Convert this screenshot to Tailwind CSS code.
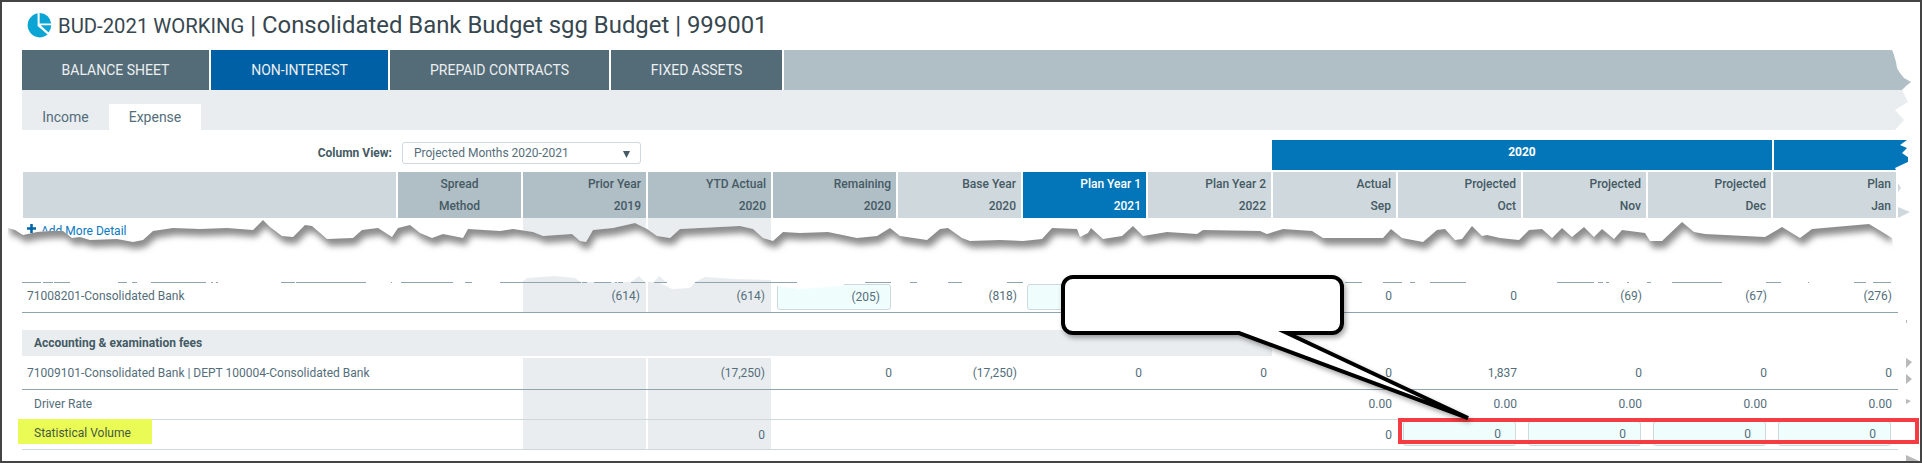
<!DOCTYPE html>
<html lang="en">
<head>
    <meta charset="UTF-8">
    <title>BUD-2021 WORKING</title>
    <script src="https://cdn.jsdelivr.net/npm/@tailwindcss/browser@4"></script>
</head>
<body class="bg-white font-['Roboto',sans-serif] text-[12px] text-[#546e7a]">
<div class="relative w-[1922px] h-[463px] overflow-hidden">
    <div class="w-full h-full border-2 border-[#444444] pl-[20px] overflow-hidden">
        <!-- title -->
        <div class="flex items-center h-[48px] text-[#37474f]">
            <svg class="w-[27px] h-[48px] shrink-0 ml-[4px] mr-[5px]" viewBox="26 2 27 48">
                <path d="M37.6 13.2 V26 L47.6 34.6 A12.2 12.2 0 1 1 37.6 13.2 Z" fill="#0ba5d5"/>
                <path d="M39.6 13 A11.5 11.5 0 0 1 51.2 23.6 H39.6 Z" fill="#0ba5d5"/>
                <path d="M40.6 25.2 H51.2 A12 12 0 0 1 48.6 32.6 Z" fill="#0ba5d5"/>
            </svg>
            <span class="text-[20.3px] whitespace-pre">BUD-2021 WORKING</span>
            <span class="text-[23.9px] whitespace-pre"> | Consolidated Bank Budget sgg Budget | 999001</span>
        </div>
        <!-- main tabs -->
        <div class="flex h-[40px] text-[14px] text-[#eceff1]">
            <div class="w-[189px] flex items-center justify-center bg-[#546c78] border-r-2 border-white">BALANCE SHEET</div>
            <div class="w-[179px] flex items-center justify-center bg-[#0060a5] border-r-2 border-white">NON-INTEREST</div>
            <div class="w-[221px] flex items-center justify-center bg-[#546c78] border-r-2 border-white">PREPAID CONTRACTS</div>
            <div class="w-[173px] flex items-center justify-center bg-[#546c78] border-r-2 border-white">FIXED ASSETS</div>
            <div class="w-[1127px] bg-[#b0bec5] [clip-path:polygon(0_0,1108px_0,1110px_5px,1112px_12px,1113px_18px,1116px_23px,1120px_28px,1127px_32px,1122px_36px,1118px_40px,0_40px)]"></div>
        </div>
        <!-- sub tabs -->
        <div class="flex items-end h-[40px] w-[1886px] bg-[#e9edf0] text-[14px] text-[#546e7a] [clip-path:polygon(0_0,1880px_0,1886px_12px,1873px_20px,1882px_30px,1873px_40px,0_40px)]">
            <div class="w-[87px] h-[26px] flex items-center justify-center">Income</div>
            <div class="w-[92px] h-[26px] flex items-center justify-center bg-white">Expense</div>
        </div>
        <!-- column view + year bands -->
        <div class="flex h-[32px] mt-[10px]">
            <div class="w-[1250px] flex items-start justify-start pt-[2px]">
                <div class="w-[370px] h-[22px] flex items-center justify-end font-bold text-[#455a64]">Column View:</div>
                <div class="ml-[10px] w-[239px] h-[22px] flex items-center justify-between pl-[11px] pr-[10px] border border-[#cfd8dc] rounded-[3px]">
                    <span>Projected Months 2020-2021</span>
                    <svg class="w-[7px] h-[7px] mt-[3px]" viewBox="0 0 8 8"><path d="M0 0 H8 L4 8 Z" fill="#455a64"/></svg>
                </div>
            </div>
            <div class="w-[500px] h-[30px] pb-[6px] mr-[2px] bg-[#0276b8] flex items-center justify-center text-white font-bold">2020</div>
            <div class="w-[134px] h-[30px] bg-[#0276b8] [clip-path:polygon(0_0,133px_0,126px_5px,133px_8px,128px_13px,138px_20px,121px_28px,122px_30px,0_30px)]"></div>
        </div>
        <!-- column headers -->
        <div class="grid grid-cols-[376px_repeat(12,125px)] w-[1876px] h-[46px] font-medium leading-[22px] text-[#455a64]">
            <div class="ml-px bg-[#cfd8dc] border-r-2 border-white"></div>
            <div class="bg-[#b0bec5] border-r-2 border-white text-center py-px">Spread<br>Method</div>
            <div class="bg-[#b0bec5] border-r-2 border-white text-right pr-[5px] py-px">Prior Year<br>2019</div>
            <div class="bg-[#b0bec5] border-r-2 border-white text-right pr-[5px] py-px">YTD Actual<br>2020</div>
            <div class="bg-[#b0bec5] border-r-2 border-white text-right pr-[5px] py-px">Remaining<br>2020</div>
            <div class="bg-[#cfd8dc] border-r-2 border-white text-right pr-[5px] py-px">Base Year<br>2020</div>
            <div class="bg-[#0276b8] border-r-2 border-white text-right pr-[5px] py-px text-white">Plan Year 1<br>2021</div>
            <div class="bg-[#cfd8dc] border-r-2 border-white text-right pr-[5px] py-px">Plan Year 2<br>2022</div>
            <div class="bg-[#cfd8dc] border-r-2 border-white text-right pr-[5px] py-px">Actual<br>Sep</div>
            <div class="bg-[#cfd8dc] border-r-2 border-white text-right pr-[5px] py-px">Projected<br>Oct</div>
            <div class="bg-[#cfd8dc] border-r-2 border-white text-right pr-[5px] py-px">Projected<br>Nov</div>
            <div class="bg-[#cfd8dc] border-r-2 border-white text-right pr-[5px] py-px">Projected<br>Dec</div>
            <div class="bg-[#cfd8dc] border-r-2 border-white text-right pr-[5px] py-px">Plan<br>Jan</div>
        </div>
        <!-- add more detail, mostly torn away -->
        <div class="grid grid-cols-[376px_repeat(12,125px)] w-[1876px] h-[64px]">
            <div class="flex items-start gap-[3px] pl-[5px] pt-[4px] text-[#0a78c0]">
                <svg class="w-[9px] h-[9px] mt-[2px] mr-[2px]" viewBox="0 0 9 9"><path d="M3.2 0 H5.8 V3.2 H9 V5.8 H5.8 V9 H3.2 V5.8 H0 V3.2 H3.2 Z" fill="#0066aa"/></svg>
                <span>Add More Detail</span>
            </div>
            <div></div>
            <div class="bg-[#e9edf0] border-r-2 border-white"></div>
            <div class="bg-[#e9edf0] border-r-2 border-white"></div>
        </div>
        <!-- 71008201 -->
        <div class="grid grid-cols-[376px_repeat(12,125px)] w-[1876px] h-[31px] items-stretch border-b border-[#90a4ae] [&>div]:pb-[2px]">
            <div class="flex items-center pl-[5px]">71008201-Consolidated Bank</div>
            <div></div>
            <div class="flex items-center justify-end pr-[6px] bg-[#e9edf0] border-r-2 border-white">(614)</div>
            <div class="flex items-center justify-end pr-[6px] bg-[#e9edf0] border-r-2 border-white">(614)</div>
            <div class="flex items-center pt-[2px] pl-[4px] pr-[7px]"><div class="w-full h-full flex items-center justify-end pr-[10px] bg-[#f0fdfd] border border-[#cfd8dc] rounded-[3px]">(205)</div></div>
            <div class="flex items-center justify-end pr-[6px]">(818)</div>
            <div class="flex items-center pt-[2px] pl-[4px] pr-[7px]"><div class="w-full h-full bg-[#f0fdfd] border border-[#cfd8dc] rounded-[3px]"></div></div>
            <div></div>
            <div class="flex items-center justify-end pr-[6px]">0</div>
            <div class="flex items-center justify-end pr-[6px]">0</div>
            <div class="flex items-center justify-end pr-[6px]">(69)</div>
            <div class="flex items-center justify-end pr-[6px]">(67)</div>
            <div class="flex items-center justify-end pr-[6px]">(276)</div>
        </div>
        <!-- section -->
        <div class="w-[1250px] h-[26px] mt-[17px] mb-[2px] flex items-center pl-[12px] bg-[#e9edf0] font-bold text-[#455a64]">Accounting &amp; examination fees</div>
        <!-- 71009101 -->
        <div class="grid grid-cols-[376px_repeat(12,125px)] w-[1876px] h-[32px] border-b border-[#90a4ae]">
            <div class="flex items-center pl-[5px] pb-[2px]">71009101-Consolidated Bank | DEPT 100004-Consolidated Bank</div>
            <div></div>
            <div class="bg-[#e9edf0] border-r-2 border-white"></div>
            <div class="flex items-center justify-end pr-[6px] pb-[2px] bg-[#e9edf0] border-r-2 border-white">(17,250)</div>
            <div class="flex items-center justify-end pr-[6px] pb-[2px]">0</div>
            <div class="flex items-center justify-end pr-[6px] pb-[2px]">(17,250)</div>
            <div class="flex items-center justify-end pr-[6px] pb-[2px]">0</div>
            <div class="flex items-center justify-end pr-[6px] pb-[2px]">0</div>
            <div class="flex items-center justify-end pr-[6px] pb-[2px]">0</div>
            <div class="flex items-center justify-end pr-[6px] pb-[2px]">1,837</div>
            <div class="flex items-center justify-end pr-[6px] pb-[2px]">0</div>
            <div class="flex items-center justify-end pr-[6px] pb-[2px]">0</div>
            <div class="flex items-center justify-end pr-[6px] pb-[2px]">0</div>
        </div>
        <!-- driver rate -->
        <div class="grid grid-cols-[376px_repeat(12,125px)] w-[1876px] h-[30px] border-b border-[#cfd8dc]">
            <div class="flex items-center pl-[12px] pb-[2px]">Driver Rate</div>
            <div></div>
            <div class="bg-[#e9edf0] border-r-2 border-white"></div>
            <div class="bg-[#e9edf0] border-r-2 border-white"></div>
            <div></div>
            <div></div>
            <div></div>
            <div></div>
            <div class="flex items-center justify-end pr-[6px] pb-[2px]">0.00</div>
            <div class="flex items-center justify-end pr-[6px] pb-[2px]">0.00</div>
            <div class="flex items-center justify-end pr-[6px] pb-[2px]">0.00</div>
            <div class="flex items-center justify-end pr-[6px] pb-[2px]">0.00</div>
            <div class="flex items-center justify-end pr-[6px] pb-[2px]">0.00</div>
        </div>
        <!-- statistical volume -->
        <div class="grid grid-cols-[376px_repeat(12,125px)] w-[1876px] h-[30px] border-b border-[#cfd8dc]">
            <div><div class="-ml-[4px] -mt-px w-[134px] h-[25px] flex items-center pl-[16px] pt-[2px] bg-[#ebfb55] text-[#455a3f]">Statistical Volume</div></div>
            <div></div>
            <div class="bg-[#e9edf0] border-r-2 border-white"></div>
            <div class="flex items-center justify-end pr-[6px] bg-[#e9edf0] border-r-2 border-white">0</div>
            <div></div>
            <div></div>
            <div></div>
            <div></div>
            <div class="flex items-center justify-end pr-[6px]">0</div>
            <div class="pt-px pl-[5px] pr-[7px] pb-[3px]"><div class="w-full h-full flex items-center justify-end pr-[14px] bg-[#f0fdfd] border border-[#cfd8dc] rounded-[3px]">0</div></div>
            <div class="pt-px pl-[5px] pr-[7px] pb-[3px]"><div class="w-full h-full flex items-center justify-end pr-[14px] bg-[#f0fdfd] border border-[#cfd8dc] rounded-[3px]">0</div></div>
            <div class="pt-px pl-[5px] pr-[7px] pb-[3px]"><div class="w-full h-full flex items-center justify-end pr-[14px] bg-[#f0fdfd] border border-[#cfd8dc] rounded-[3px]">0</div></div>
            <div class="pt-px pl-[5px] pr-[7px] pb-[3px]"><div class="w-full h-full flex items-center justify-end pr-[14px] bg-[#f0fdfd] border border-[#cfd8dc] rounded-[3px]">0</div></div>
        </div>
    </div>

    <!-- annotations drawn over the screenshot: torn edge, callout, red box -->
    <svg class="absolute top-0 left-0 w-[1922px] h-[463px] pointer-events-none" viewBox="0 0 1922 463">
        <defs>
            <clipPath id="below"><path d="M8 228 L15 230 L23 235 L37 232 L50 231 L63 231 L72 238 L80 237 L90 240 L117 239 L133 242 L143 240 L153 231 L173 228 L200 229 L227 228 L253 230 L263 220 L270 227 L282 236 L293 237 L305 225 L312 226 L327 239 L353 238 L362 230 L378 228 L392 237 L398 228 L410 225 L420 233 L432 238 L443 234 L463 238 L468 229 L500 231 L513 229 L533 232 L543 236 L572 234 L580 241 L586 242 L593 230 L613 228 L635 223 L647 229 L657 236 L670 238 L680 229 L700 228 L740 226 L753 229 L763 238 L773 241 L783 232 L800 233 L828 232 L857 238 L877 236 L890 228 L900 236 L927 240 L940 229 L948 228 L962 238 L970 241 L1000 240 L1023 241 L1042 239 L1052 228 L1077 229 L1080 237 L1088 233 L1091 228 L1103 239 L1122 236 L1133 226 L1143 236 L1167 232 L1197 234 L1203 230 L1260 231 L1267 234 L1283 229 L1312 231 L1323 238 L1383 238 L1391 229 L1402 238 L1423 242 L1437 230 L1445 229 L1455 240 L1462 239 L1472 226 L1482 236 L1487 235 L1500 238 L1519 240 L1529 230 L1542 229 L1552 238 L1562 228 L1572 237 L1584 227 L1594 237 L1602 229 L1614 239 L1622 230 L1645 233 L1650 241 L1662 241 L1682 222 L1694 232 L1705 234 L1765 237 L1782 227 L1800 238 L1812 229 L1869 224 L1879 230 L1892 238 L1900 282 L4 282 Z"/></clipPath>
            <filter id="soft" x="-5%" y="-100%" width="110%" height="300%"><feGaussianBlur stdDeviation="3.2"/></filter>
            <filter id="calloutShadow" x="-10%" y="-10%" width="120%" height="130%"><feDropShadow dx="2" dy="3" stdDeviation="2.5" flood-color="#000" flood-opacity="0.35"/></filter>
        </defs>

        <!-- the white gap between the two halves of the tear -->
        <path fill="#ffffff" d="M8 228 L15 230 L23 235 L37 232 L50 231 L63 231 L72 238 L80 237 L90 240 L117 239 L133 242 L143 240 L153 231 L173 228 L200 229 L227 228 L253 230 L263 220 L270 227 L282 236 L293 237 L305 225 L312 226 L327 239 L353 238 L362 230 L378 228 L392 237 L398 228 L410 225 L420 233 L432 238 L443 234 L463 238 L468 229 L500 231 L513 229 L533 232 L543 236 L572 234 L580 241 L586 242 L593 230 L613 228 L635 223 L647 229 L657 236 L670 238 L680 229 L700 228 L740 226 L753 229 L763 238 L773 241 L783 232 L800 233 L828 232 L857 238 L877 236 L890 228 L900 236 L927 240 L940 229 L948 228 L962 238 L970 241 L1000 240 L1023 241 L1042 239 L1052 228 L1077 229 L1080 237 L1088 233 L1091 228 L1103 239 L1122 236 L1133 226 L1143 236 L1167 232 L1197 234 L1203 230 L1260 231 L1267 234 L1283 229 L1312 231 L1323 238 L1383 238 L1391 229 L1402 238 L1423 242 L1437 230 L1445 229 L1455 240 L1462 239 L1472 226 L1482 236 L1487 235 L1500 238 L1519 240 L1529 230 L1542 229 L1552 238 L1562 228 L1572 237 L1584 227 L1594 237 L1602 229 L1614 239 L1622 230 L1645 233 L1650 241 L1662 241 L1682 222 L1694 232 L1705 234 L1765 237 L1782 227 L1800 238 L1812 229 L1869 224 L1879 230 L1892 238 L1900 282 L4 282 Z"/>
        <g clip-path="url(#below)">
            <path filter="url(#soft)" transform="translate(3 7)" fill="#8c8c8c" d="M0 190 L8 228 L15 230 L23 235 L37 232 L50 231 L63 231 L72 238 L80 237 L90 240 L117 239 L133 242 L143 240 L153 231 L173 228 L200 229 L227 228 L253 230 L263 220 L270 227 L282 236 L293 237 L305 225 L312 226 L327 239 L353 238 L362 230 L378 228 L392 237 L398 228 L410 225 L420 233 L432 238 L443 234 L463 238 L468 229 L500 231 L513 229 L533 232 L543 236 L572 234 L580 241 L586 242 L593 230 L613 228 L635 223 L647 229 L657 236 L670 238 L680 229 L700 228 L740 226 L753 229 L763 238 L773 241 L783 232 L800 233 L828 232 L857 238 L877 236 L890 228 L900 236 L927 240 L940 229 L948 228 L962 238 L970 241 L1000 240 L1023 241 L1042 239 L1052 228 L1077 229 L1080 237 L1088 233 L1091 228 L1103 239 L1122 236 L1133 226 L1143 236 L1167 232 L1197 234 L1203 230 L1260 231 L1267 234 L1283 229 L1312 231 L1323 238 L1383 238 L1391 229 L1402 238 L1423 242 L1437 230 L1445 229 L1455 240 L1462 239 L1472 226 L1482 236 L1487 235 L1500 238 L1519 240 L1529 230 L1542 229 L1552 238 L1562 228 L1572 237 L1584 227 L1594 237 L1602 229 L1614 239 L1622 230 L1645 233 L1650 241 L1662 241 L1682 222 L1694 232 L1705 234 L1765 237 L1782 227 L1800 238 L1812 229 L1869 224 L1879 230 L1889 236 L1889 190 Z"/>
        </g>

        <!-- what is left of the row above 71008201 -->
        <path fill="#e9edf0" d="M522 282 L527 278 L555 276 L575 278 L581 282 Z M631 282 L639 276 L645 282 Z M654 282 L659 276 L666 282 Z M695 282 L705 277 L735 279 L771 280 L771 282 Z"/>
        <path fill="#ffffff" d="M658 282 L672 289 L690 288 L695 282 Z M772 282 L845 282 L843 286 L800 289 L777 286 Z"/>
        <path stroke="#90a4ae" stroke-width="1" fill="none" d="M22 282.5 H41 M43 282.5 H53 M54 282.5 H70 M118 282.5 H127 M132 282.5 H137 M151 282.5 H206 M211 282.5 H213 M216 282.5 H218 M281 282.5 H295 M296 282.5 H366 M391 282.5 H392 M401 282.5 H453 M465 282.5 H472 M500 282.5 H581 M582 282.5 H587 M594 282.5 H611 M615 282.5 H617 M618 282.5 H623 M631 282.5 H645 M654 282.5 H667 M695 282.5 H797 M865 282.5 H891 M910 282.5 H917 M948 282.5 H962 M1007 282.5 H1023 M1345 282.5 H1362 M1383 282.5 H1402 M1410 282.5 H1415 M1430 282.5 H1466 M1557 282.5 H1594 M1598 282.5 H1603 M1606 282.5 H1609 M1627 282.5 H1629 M1647 282.5 H1651 M1672 282.5 H1722 M1766 282.5 H1781 M1808 282.5 H1809 M1854 282.5 H1866 M1873 282.5 H1891"/>

        <!-- bits of the torn right edge -->
        <path fill="#cfd8dc" d="M1898 183 L1901 188 L1898 192 Z M1898 207 L1910 212 L1898 218 Z"/>
        <path fill="#b9b9b9" d="M1906 320 H1907 V323 H1906 Z M1906 358 L1912 362 L1906 368 Z M1906 374 L1912 379 L1906 384 Z M1906 399 L1911 401 L1906 404 Z M1906 455 L1919 461 H1906 Z"/>

        <!-- red box -->
        <rect x="1400" y="420" width="517" height="22" fill="none" stroke="#f53c42" stroke-width="4"/>

        <!-- callout -->
        <path filter="url(#calloutShadow)" fill="#ffffff" stroke="#000000" stroke-width="4" stroke-linejoin="miter" stroke-miterlimit="12" d="M1073 277 H1332 A10 10 0 0 1 1342 287 V323 A10 10 0 0 1 1332 333 H1287 L1468 418 L1239 333 H1073 A10 10 0 0 1 1063 323 V287 A10 10 0 0 1 1073 277 Z"/>
    </svg>
</div>
</body>
</html>
